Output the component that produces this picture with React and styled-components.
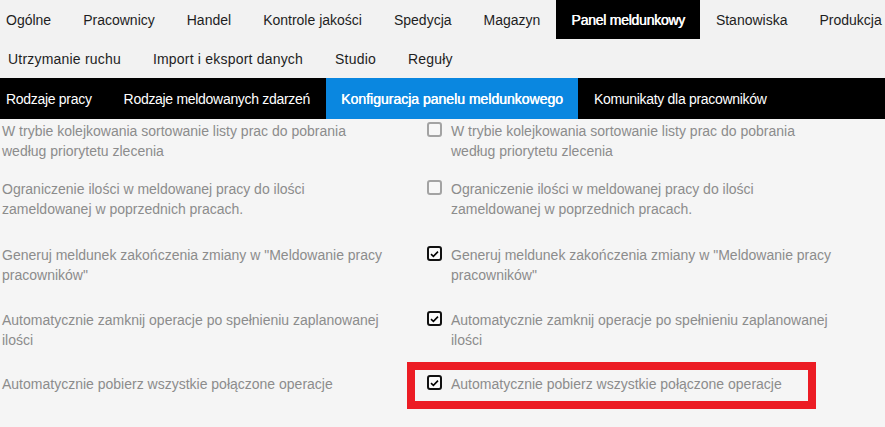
import React from "react";
import styled, { createGlobalStyle } from "styled-components";

const GlobalStyle = createGlobalStyle`
  html, body { margin: 0; padding: 0; background: #f5f5f5; }
  body { font-family: "Liberation Sans", Arial, sans-serif; font-size: 14px; }
  * { box-sizing: border-box; }
`;

const Page = styled.div`
  width: 885px;
  height: 427px;
  overflow: hidden;
  background: #f5f5f5;
`;

const TopNav = styled.nav`
  background: #f2f2f2;
  display: flex;
  flex-direction: column;
`;

const NavRow = styled.div`
  display: flex;
  height: 39px;
  margin-left: ${(p) => p.$offset}px;
  letter-spacing: ${(p) => p.$spacing}px;
  white-space: nowrap;
`;

const NavItem = styled.div`
  display: flex;
  align-items: center;
  padding: 0 ${(p) => (p.$active ? 15 : 16)}px;
  color: ${(p) => (p.$active ? "#fff" : "#1e1e1e")};
  background: ${(p) => (p.$active ? "#000" : "transparent")};
  ${(p) => p.$active && "letter-spacing: -0.25px; text-shadow: 0.45px 0 0 #fff;"}
`;

const SubNav = styled.div`
  display: flex;
  height: 41px;
  background: #000;
  white-space: nowrap;
`;

const SubItem = styled.div`
  display: flex;
  align-items: center;
  padding: 0 ${(p) => (p.$active ? 15 : 16)}px;
  margin-left: ${(p) => (p.$first ? -10 : 0)}px;
  color: #fff;
  background: ${(p) => (p.$active ? "#0a87e0" : "transparent")};
  letter-spacing: ${(p) => (p.$active ? "0" : "-0.3px")};
  text-shadow: ${(p) => (p.$active ? "0.45px 0 0 #fff" : "none")};
`;

const Content = styled.div`
  padding: 2px 0 0 2px;
  display: flex;
  flex-direction: column;
`;

const Row = styled.div`
  display: grid;
  grid-template-columns: 425px 458px;
  margin-bottom: ${(p) => p.$gap}px;
`;

const Label = styled.div`
  color: #8c8c8c;
  line-height: 20px;
  width: ${(p) => p.$width}px;
  flex: none;
`;

const OptionCell = styled.div`
  position: relative;
  display: flex;
  align-items: flex-start;
  gap: 9px;
`;

const Box = styled.span`
  flex: none;
  width: 15px;
  height: 15px;
  margin-top: 1px;
  border-radius: 3px;
  border: 2px solid ${(p) => (p.$checked ? "#111" : "#a3a3a3")};
  background: ${(p) => (p.$checked ? "#fafafa" : "#f7f7f7")};
  display: flex;
  align-items: center;
  justify-content: center;
`;

const Highlight = styled.div`
  position: absolute;
  left: -20px;
  top: -12px;
  width: 409px;
  height: 47px;
  border: 8px solid #ec1c24;
  pointer-events: none;
`;

const Checkbox = ({ checked }) => (
  <Box $checked={checked}>
    {checked && (
      <svg width="9" height="8" viewBox="0 0 9 8">
        <polyline points="1,4.2 3.4,6.4 8,1.6" fill="none" stroke="#000" strokeWidth="1.6" />
      </svg>
    )}
  </Box>
);

const row1 = ["Ogólne", "Pracownicy", "Handel", "Kontrole jakości", "Spedycja", "Magazyn", "Panel meldunkowy", "Stanowiska", "Produkcja"];
const row2 = ["Utrzymanie ruchu", "Import i eksport danych", "Studio", "Reguły"];
const tabs = ["Rodzaje pracy", "Rodzaje meldowanych zdarzeń", "Konfiguracja panelu meldunkowego", "Komunikaty dla pracowników"];

const options = [
  { text: "W trybie kolejkowania sortowanie listy prac do pobrania według priorytetu zlecenia", checked: false, gap: 18 },
  { text: "Ograniczenie ilości w meldowanej pracy do ilości zameldowanej w poprzednich pracach.", checked: false, gap: 26 },
  { text: 'Generuj meldunek zakończenia zmiany w "Meldowanie pracy pracowników"', checked: true, gap: 25 },
  { text: "Automatycznie zamknij operacje po spełnieniu zaplanowanej ilości", checked: true, gap: 24 },
  { text: "Automatycznie pobierz wszystkie połączone operacje", checked: true, gap: 0, highlight: true },
];

export default function App() {
  return (
    <Page>
      <GlobalStyle />
      <TopNav>
        <NavRow $offset={-10} $spacing={0}>
          {row1.map((t) => (
            <NavItem key={t} $active={t === "Panel meldunkowy"}>{t}</NavItem>
          ))}
        </NavRow>
        <NavRow $offset={-8} $spacing={0.2}>
          {row2.map((t) => (
            <NavItem key={t}>{t}</NavItem>
          ))}
        </NavRow>
      </TopNav>
      <SubNav>
        {tabs.map((t, i) => (
          <SubItem key={t} $first={i === 0} $active={i === 2}>{t}</SubItem>
        ))}
      </SubNav>
      <Content>
        {options.map((o) => (
          <Row key={o.text} $gap={o.gap}>
            <Label $width={388}>{o.text}</Label>
            <OptionCell>
              <Checkbox checked={o.checked} />
              <Label $width={382}>{o.text}</Label>
              {o.highlight && <Highlight />}
            </OptionCell>
          </Row>
        ))}
      </Content>
    </Page>
  );
}
